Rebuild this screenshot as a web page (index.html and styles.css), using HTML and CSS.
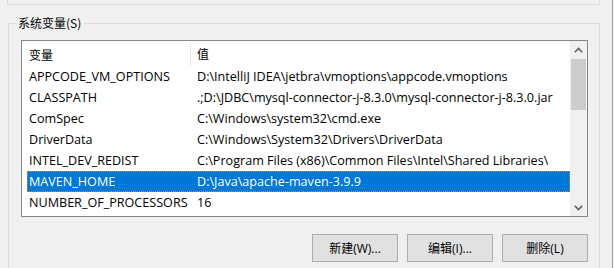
FILE: index.html
```html
<!DOCTYPE html>
<html lang="zh-CN">
<head>
<meta charset="utf-8">
<title>系统变量</title>
<link rel="stylesheet" href="styles.css">
</head>
<body>
<div class="window">
  <div class="upper-box"></div>
  <div class="group">
    <span class="group-label">系统变量(S)</span>
    <div class="listview">
      <div class="list-main">
        <div class="list-header">
          <div class="col col-name">变量</div>
          <div class="col col-value">值</div>
        </div>
        <div class="row"><div class="col col-name">APPCODE_VM_OPTIONS</div><div class="col col-value">D:\IntelliJ IDEA\jetbra\vmoptions\appcode.vmoptions</div></div>
        <div class="row"><div class="col col-name">CLASSPATH</div><div class="col col-value">.;D:\JDBC\mysql-connector-j-8.3.0\mysql-connector-j-8.3.0.jar</div></div>
        <div class="row"><div class="col col-name">ComSpec</div><div class="col col-value">C:\Windows\system32\cmd.exe</div></div>
        <div class="row"><div class="col col-name">DriverData</div><div class="col col-value">C:\Windows\System32\Drivers\DriverData</div></div>
        <div class="row"><div class="col col-name">INTEL_DEV_REDIST</div><div class="col col-value">C:\Program Files (x86)\Common Files\Intel\Shared Libraries\</div></div>
        <div class="row selected"><div class="col col-name">MAVEN_HOME</div><div class="col col-value">D:\Java\apache-maven-3.9.9</div></div>
        <div class="row"><div class="col col-name">NUMBER_OF_PROCESSORS</div><div class="col col-value">16</div></div>
      </div>
      <div class="scrollbar">
        <div class="arrow">
          <svg width="9" height="6" viewBox="0 0 9 6"><path d="M0.8 5.2 L4.5 1.5 L8.2 5.2" fill="none" stroke="#606060" stroke-width="1.6"/></svg>
        </div>
        <div class="thumb"></div>
        <div class="track"></div>
        <div class="arrow">
          <svg width="9" height="6" viewBox="0 0 9 6"><path d="M0.8 0.8 L4.5 4.5 L8.2 0.8" fill="none" stroke="#606060" stroke-width="1.6"/></svg>
        </div>
      </div>
    </div>
    <div class="buttons">
      <button class="btn">新建(W)...</button>
      <button class="btn">编辑(I)...</button>
      <button class="btn">删除(L)</button>
    </div>
  </div>
</div>
</body>
</html>
```
FILE: styles.css
```css
html, body {
  margin: 0;
  padding: 0;
  background: #f0f0f0;
  overflow: hidden;
}
body {
  width: 614px;
  height: 268px;
  font-family: "Open Sans", "Noto Sans CJK SC", sans-serif;
  font-size: 12.6px;
  color: #000;
}
.window {
  width: 613px;
  height: 268px;
  box-sizing: border-box;
  border-right: 1px solid #a0a0a0;
  overflow: hidden;
}
.upper-box {
  margin-left: 7px;
  width: 593px;
  height: 5px;
  box-sizing: border-box;
  border: 1px solid #dcdcdc;
  border-top: none;
}
.group {
  position: relative;
  margin-left: 8px;
  margin-top: 18px;
  width: 592px;
  height: 245px;
  box-sizing: border-box;
  border: 1px solid #dcdcdc;
  border-bottom: none;
  padding: 16px 0 0 12px;
}
.group-label {
  position: absolute;
  left: 6px;
  top: -10px;
  padding: 0 3px;
  background: #f0f0f0;
  font-family: "Noto Sans CJK SC", sans-serif;
  font-size: 12px;
  line-height: 17px;
}
.listview {
  display: flex;
  width: 567px;
  height: 177px;
  box-sizing: border-box;
  border: 1px solid #828790;
  background: #fff;
}
.list-main {
  flex: 1;
  overflow: hidden;
}
.list-header {
  display: flex;
  height: 25px;
  align-items: center;
  font-family: "Noto Sans CJK SC", sans-serif;
  font-size: 12px;
}
.list-header .col-name {
  padding-left: 7px;
  width: 161px;
  border-right: 1px solid #e5e5e5;
  height: 22px;
  line-height: 22px;
  margin-top: 3px;
}
.list-header .col-value {
  padding-left: 6px;
}
.row {
  display: flex;
  height: 21px;
  line-height: 21px;
  margin-left: 5px;
  white-space: nowrap;
}
.row .col-name {
  width: 161px;
  padding-left: 2px;
  flex: none;
}
.row .col-value {
  padding-left: 7px;
  overflow: hidden;
}
.row.selected {
  background: #0078d7;
  color: #fff;
  outline: 1px dotted #d08a3a;
  outline-offset: -1px;
}
.scrollbar {
  width: 17px;
  display: flex;
  flex-direction: column;
  background: #f0f0f0;
}
.arrow {
  height: 17px;
  display: flex;
  align-items: center;
  justify-content: center;
}
.thumb {
  height: 51px;
  margin: 1px 1px 0 1px;
  background: #cdcdcd;
}
.track {
  flex: 1;
}
.buttons {
  display: flex;
  justify-content: flex-end;
  gap: 9px;
  width: 567px;
  margin-top: 17px;
}
.btn {
  width: 86px;
  height: 28px;
  padding: 0;
  background: #e1e1e1;
  border: 1px solid #adadad;
  border-radius: 0;
  font-family: "Open Sans", "Noto Sans CJK SC", sans-serif;
  font-size: 12px;
  color: #000;
}
```
